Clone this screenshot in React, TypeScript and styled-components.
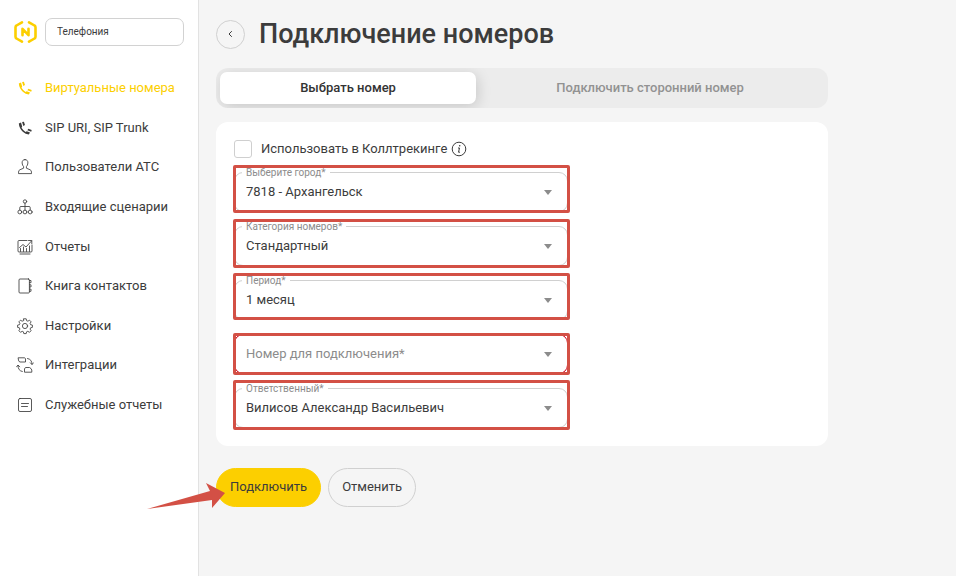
import React from "react";
import styled, { createGlobalStyle, css } from "styled-components";

const GlobalStyle = createGlobalStyle`
  *, *::before, *::after { box-sizing: border-box; }
  body {
    margin: 0;
    background: #f5f5f5;
    color: #3c3c3c;
    font-family: Roboto, "Liberation Sans", sans-serif;
    font-size: 13px;
    line-height: 18px;
  }
  button, select, input { font: inherit; color: inherit; }
`;

const Page = styled.div`
  display: flex;
  min-height: 100vh;
`;

const Sidebar = styled.aside`
  flex: 0 0 199px;
  padding: 18px 14px;
  background: #fff;
  border-right: 1px solid #e2e2e2;
`;

const Brand = styled.div`
  display: flex;
  align-items: center;
  gap: 8px;
`;

const Logo = styled.svg`
  flex: none;
  width: 23px;
  height: 24px;
`;

const ProductSelect = styled.select`
  appearance: none;
  flex: 1;
  min-width: 0;
  height: 28px;
  padding: 0 11px;
  border: 1px solid #d2d2d2;
  border-radius: 7px;
  background: #fff;
  font-size: 10px;
`;

const Nav = styled.ul`
  display: flex;
  flex-direction: column;
  justify-content: space-between;
  min-height: 335px;
  margin: 33px 0 0;
  padding: 0;
  list-style: none;
`;

const NavLink = styled.a<{ $active?: boolean }>`
  display: flex;
  align-items: center;
  gap: 11px;
  padding-left: 2px;
  color: ${(p) => (p.$active ? "#fccf00" : "#3c3c3c")};
  text-decoration: none;
  white-space: nowrap;
`;

const NavIcon = styled.svg`
  flex: none;
  width: 18px;
  height: 18px;
  fill: none;
  stroke: currentColor;
  stroke-width: 0.85;
  stroke-linecap: round;
  stroke-linejoin: round;
`;

const Main = styled.main`
  flex: 1;
  min-width: 0;
  padding: 16px 17px;
`;

const Content = styled.div`
  display: flex;
  flex-direction: column;
  max-width: 612px;
`;

const Header = styled.header`
  display: flex;
  align-items: center;
  gap: 14px;
`;

const BackButton = styled.button`
  display: grid;
  place-items: center;
  width: 29px;
  height: 29px;
  padding: 0;
  border: 1px solid #d0d0d0;
  border-radius: 50%;
  background: transparent;
`;

const Title = styled.h1`
  margin: 0;
  font-size: 27px;
  line-height: 36px;
  font-weight: 500;
`;

const Tabs = styled.div`
  display: flex;
  height: 40px;
  margin-top: 16px;
  padding: 4px;
  border-radius: 12px;
  background: #ececec;
  overflow: hidden;
`;

const Tab = styled.button<{ $active?: boolean }>`
  flex: 1 1 auto;
  padding: 0;
  border: 0;
  border-radius: 7px;
  background: transparent;
  color: #929292;
  font-weight: 500;
  ${(p) =>
    p.$active &&
    css`
      background: #fff;
      color: #333;
      box-shadow: 2px 3px 14px rgba(0, 0, 0, 0.15);
    `}
`;

const Card = styled.section`
  display: flex;
  flex-direction: column;
  gap: 14px;
  margin-top: 14px;
  padding: 18px;
  border-radius: 12px;
  background: #fff;
`;

const CheckRow = styled.div`
  display: flex;
  align-items: center;
`;

const Checkbox = styled.input`
  appearance: none;
  width: 18px;
  height: 18px;
  margin: 0 9px 0 0;
  border: 1px solid #cfcfcf;
  border-radius: 3px;
  background: #fff;
  &:checked { background: #fccf00; }
`;

const InfoIcon = styled.svg`
  width: 16px;
  height: 16px;
  margin-left: 4px;
`;

const Field = styled.div`
  position: relative;
  width: 100%;
  max-width: 334px;
  height: 40px;
`;

const FieldLabel = styled.label`
  position: absolute;
  top: -5px;
  left: 8px;
  padding: 0 4px;
  background: #fff;
  color: #8c8c8c;
  font-size: 10px;
  line-height: 12px;
`;

const FieldSelect = styled.select<{ $invalid?: boolean }>`
  appearance: none;
  width: 100%;
  height: 100%;
  padding: 0 28px 0 11px;
  border: 1px solid ${(p) => (p.$invalid ? "#d0021b" : "#d0d0d0")};
  border-radius: 9px;
  background: #fff;
  color: ${(p) => (p.$invalid ? "#8c8c8c" : "#3c3c3c")};
`;

const Caret = styled.svg`
  position: absolute;
  top: 18px;
  right: 16px;
  width: 8px;
  height: 5px;
  fill: #8c8c8c;
  pointer-events: none;
`;

const Marker = styled.span<{ $top: number; $bottom: number }>`
  position: absolute;
  top: ${(p) => p.$top}px;
  bottom: ${(p) => p.$bottom}px;
  left: -1px;
  right: -2px;
  border: 3px solid #d35045;
  border-radius: 2px;
  pointer-events: none;
`;

const Actions = styled.div`
  position: relative;
  display: flex;
  gap: 7px;
  margin-top: 22px;
`;

const ActionButton = styled.button<{ $primary?: boolean }>`
  height: 39px;
  padding: 0 13px 2px;
  border: 1px solid ${(p) => (p.$primary ? "#fccf00" : "#d0d0d0")};
  border-radius: 20px;
  background: ${(p) => (p.$primary ? "#fccf00" : "transparent")};
`;

const Pointer = styled.svg`
  position: absolute;
  top: 14px;
  left: -70px;
  width: 80px;
  height: 28px;
  fill: #d35045;
  pointer-events: none;
`;

const icons: Record<string, React.ReactNode> = {
  phone: (
    <g fill="currentColor" stroke="none">
      <path d="M2.800 4.600 5 3.400 6.200 7.400 5.500 8.800Q7 11.400 9.600 12.900L10.800 12.200 14 13.600 12.800 15.500Q9.600 15.400 6.800 12.800 3.200 9.400 2.800 4.600Z" />
      <path d="M6.100 2.900 7.900 2.700 9 5.900 7.300 7Z" />
      <path d="M11.400 11.300 12.300 9.700 15.700 11 15.200 12.800Z" />
    </g>
  ),
  user: (
    <path d="M9 1.600C6.900 1.600 6 3 6.100 5c.1 1.600.7 2.900 1.500 3.600v1.600L3.800 11.800C2.800 12.300 2.500 13.300 2.500 15.600h13c0-2.300-.3-3.300-1.300-3.800l-3.800-1.600V8.600c.8-.7 1.400-2 1.500-3.600C12 3 11.100 1.600 9 1.600Z" />
  ),
  tree: (
    <>
      <circle cx="9" cy="3.500" r="1.700" />
      <path d="M9 5.200v7M3.800 12V9.500Q3.800 8.500 5 8.500h8q1.200 0 1.200 1V12" />
      <circle cx="3.800" cy="14" r="1.900" />
      <circle cx="9" cy="14" r="1.900" />
      <circle cx="14.200" cy="14" r="1.900" />
    </>
  ),
  chart: (
    <path d="M11 2.500H3q-1 0-1 1v9.500q0 1 1 1h12q1 0 1-1V7M4 16h10M4.500 13.500v-3M7.500 13.500V9M10.500 13.500v-3M13.500 13.500V8M3.500 9.500 7 6.500l3 2.500 5.500-6M12.500 2.500h3.300v3.200" />
  ),
  book: (
    <>
      <path d="M12.500 2H4q-1 0-1 1v12q0 1 1 1h8.500q.9 0 .9-.9V2.900Q13.400 2 12.500 2Z" />
      <path d="M13.500 3.500h1.500v2.200h-1.500M13.500 7.800h1.500v2.200h-1.500M13.500 12.100h1.500v2.200h-1.500" />
    </>
  ),
  gear: (
    <>
      <circle cx="9" cy="9" r="2.600" />
      <path d="M7.800 1.800h2.400l.4 1.900 1.300.5 1.600-1 1.600 1.600-1 1.700.5 1.200 1.800.4v2.300l-1.800.4-.5 1.300 1 1.600-1.600 1.600-1.700-1-1.200.5-.4 1.800H7.800l-.4-1.800-1.200-.5-1.700 1-1.600-1.600 1-1.600-.5-1.300-1.800-.4V8.100l1.800-.4.5-1.200-1-1.700 1.600-1.600 1.600 1 1.300-.5Z" />
    </>
  ),
  swap: (
    <path d="M2.500 1.800H8.500Q9.500 2.200 9.500 3V6H4Q2.500 5.500 2.500 4.500ZM8.500 15.800V12.800Q9 11.500 10 11.500h3.500Q15.500 12.500 15.800 14v1.800ZM11.500 2.500c3 .5 4.500 2.500 4.500 5.700M14.300 6.800 16 8.500l1.500-1.700M6.300 15.500C3.500 15 2 13 2 9.500M.6 10.800 2 9l1.700 1.800" />
  ),
  doc: (
    <>
      <rect x="2.500" y="2.500" width="13" height="13" rx="1.500" />
      <path d="M5.500 7.500h7M5.500 10.500h6" />
    </>
  ),
};

const navItems = [
  { icon: "phone", text: "Виртуальные номера", active: true },
  { icon: "phone", text: "SIP URI, SIP Trunk" },
  { icon: "user", text: "Пользователи АТС" },
  { icon: "tree", text: "Входящие сценарии" },
  { icon: "chart", text: "Отчеты" },
  { icon: "book", text: "Книга контактов" },
  { icon: "gear", text: "Настройки" },
  { icon: "swap", text: "Интеграции" },
  { icon: "doc", text: "Служебные отчеты" },
];

const fields = [
  { id: "city", label: "Выберите город*", value: "7818 - Архангельск", top: -7, bottom: -1 },
  { id: "category", label: "Категория номеров*", value: "Стандартный", top: -7, bottom: -2 },
  { id: "period", label: "Период*", value: "1 месяц", top: -7, bottom: 0 },
  { id: "number", label: "", value: "Номер для подключения*", top: -1, bottom: -1 },
  { id: "owner", label: "Ответственный*", value: "Вилисов Александр Васильевич", top: -8, bottom: -2 },
];

export default function App() {
  return (
    <Page>
      <GlobalStyle />
      <Sidebar>
        <Brand>
          <Logo viewBox="0 0 23 24" fill="none" stroke="#fccf00" strokeLinejoin="round" strokeLinecap="round">
            <path
              d="M8 2.300 2.500 5.500Q1.500 6 1.500 7.200v9.600q0 1.200 1 1.700L8 21.700M15 2.300l5.500 3.200q1 .5 1 1.700v9.600q0 1.200-1 1.700L15 21.700"
              strokeWidth="2.600"
            />
            <path d="M8.500 15.200V8.800l6 6.400V8.800" strokeWidth="2.600" />
          </Logo>
          <ProductSelect aria-label="Продукт">
            <option>Телефония</option>
          </ProductSelect>
        </Brand>
        <nav>
          <Nav>
            {navItems.map((item) => (
              <li key={item.text}>
                <NavLink href="#" $active={item.active}>
                  <NavIcon viewBox="0 0 18 18">{icons[item.icon]}</NavIcon>
                  {item.text}
                </NavLink>
              </li>
            ))}
          </Nav>
        </nav>
      </Sidebar>
      <Main>
        <Content>
          <Header>
            <BackButton type="button" aria-label="Назад">
              <svg width="8" height="8" viewBox="0 0 8 8" fill="none" stroke="#3c3c3c">
                <path d="M4.800 1.200 2 4l2.800 2.800" />
              </svg>
            </BackButton>
            <Title>Подключение номеров</Title>
          </Header>
          <Tabs role="tablist">
            <Tab type="button" role="tab" aria-selected="true" $active>
              Выбрать номер
            </Tab>
            <Tab type="button" role="tab" aria-selected="false">
              Подключить сторонний номер
            </Tab>
          </Tabs>
          <Card>
            <CheckRow>
              <Checkbox type="checkbox" id="calltracking" />
              <label htmlFor="calltracking">Использовать в Коллтрекинге</label>
              <InfoIcon viewBox="0 0 16 16" fill="none" stroke="#3c3c3c">
                <circle cx="8" cy="8" r="6.800" />
                <path d="M7 7h1.500L7.500 11.200H9" />
                <circle cx="8.700" cy="4.800" r=".8" fill="#3c3c3c" stroke="none" />
              </InfoIcon>
            </CheckRow>
            {fields.map((f) => (
              <Field key={f.id}>
                <FieldSelect id={f.id} $invalid={!f.label} aria-label={f.label ? undefined : f.value}>
                  <option>{f.value}</option>
                </FieldSelect>
                {f.label && <FieldLabel htmlFor={f.id}>{f.label}</FieldLabel>}
                <Caret viewBox="0 0 8 5">
                  <path d="M0 0h8L4 5Z" />
                </Caret>
                <Marker $top={f.top} $bottom={f.bottom} />
              </Field>
            ))}
          </Card>
          <Actions>
            <ActionButton type="button" $primary>
              Подключить
            </ActionButton>
            <ActionButton type="button">Отменить</ActionButton>
            <Pointer viewBox="0 0 80 28">
              <path d="M1 27 64 9 60 1 79 11 66 26 66 18Z" />
            </Pointer>
          </Actions>
        </Content>
      </Main>
    </Page>
  );
}
